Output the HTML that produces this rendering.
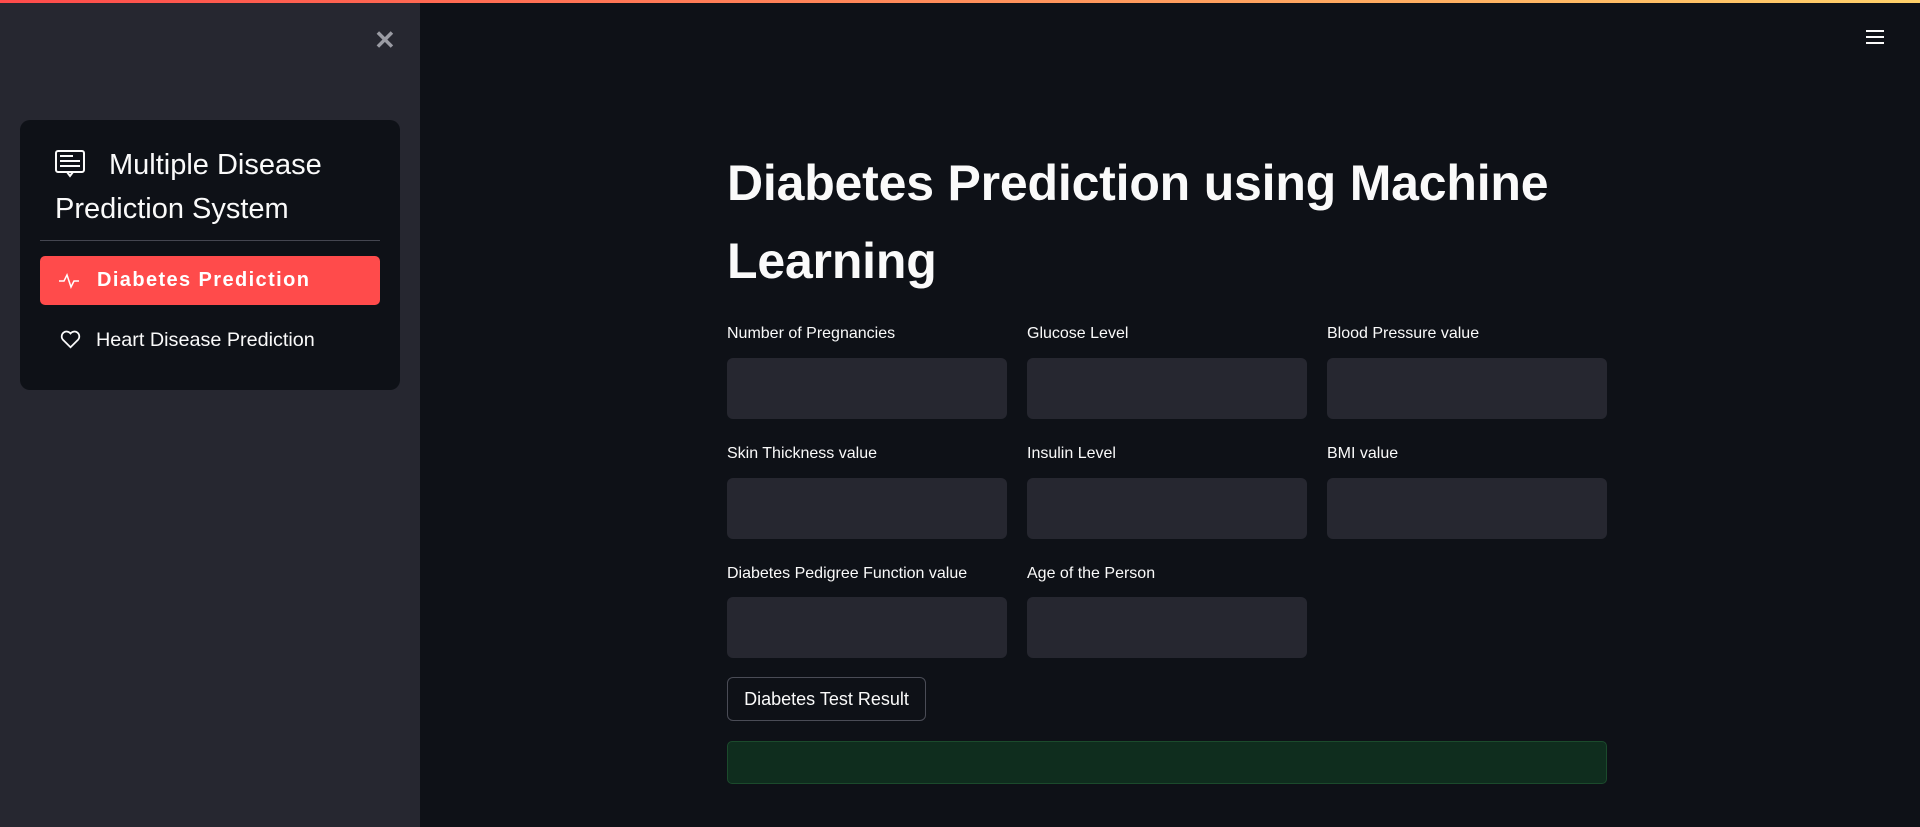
<!DOCTYPE html>
<html><head><meta charset="utf-8"><style>
*{margin:0;padding:0;box-sizing:border-box}
body{width:1920px;height:827px;background:#0e1117;font-family:"Liberation Sans",sans-serif;color:#fafafa;position:relative;overflow:hidden}
.top{position:absolute;left:0;top:0;width:1920px;height:3px;background:linear-gradient(90deg,#ff4b4b,#ffd16a)}
.side{position:absolute;left:0;top:3px;width:420px;height:824px;background:#262730}
.close{position:absolute;left:374px;top:22px;font-size:26px;color:#9a9ba3;font-weight:bold}
.card{position:absolute;left:20px;top:120px;width:380px;height:270px;background:#0e1117;border-radius:10px}
.ttl{position:absolute;left:35px;top:23px;font-size:29px;line-height:44px;color:#fafafa;width:340px}
.div{position:absolute;left:20px;top:120px;width:340px;height:1px;background:#444650}
.act{position:absolute;left:20px;top:136px;width:340px;height:49px;background:#ff4b4b;border-radius:5px}
.act span{position:absolute;left:57px;top:13px;font-size:20px;font-weight:bold;letter-spacing:1.4px;color:#fff}
.heart{position:absolute;left:76px;top:209px;font-size:19.8px;color:#fafafa}
.lbl{position:absolute;font-size:16px;color:#fafafa}
.inp{position:absolute;width:280px;height:61px;background:#262730;border-radius:6px}
h1{position:absolute;left:727px;top:144px;font-size:50px;line-height:78px;font-weight:bold;letter-spacing:-0.2px}
.btn{position:absolute;left:727px;top:677px;width:199px;height:44px;border:1px solid #4a4c56;border-radius:6px;font-size:18px;line-height:42px;text-align:center}
.res{position:absolute;left:727px;top:741px;width:880px;height:43px;background:#0f2d1e;border:1px solid #1b4a2c;border-radius:5px}
</style></head><body>
<div class="top"></div>
<div class="side">
<div class="close">✕</div>
</div>
<div class="card">
<svg style="position:absolute;left:35px;top:30px" width="30" height="28" viewBox="0 0 30 28" fill="none" stroke="#fafafa" stroke-width="2"><rect x="1" y="1" width="28" height="21" rx="2"/><line x1="5" y1="6" x2="18" y2="6"/><line x1="5" y1="11" x2="25" y2="11"/><line x1="5" y1="16" x2="25" y2="16"/><path d="M12 22 L15 26 L18 22"/></svg>
<div class="ttl"><span style="margin-left:54px">Multiple Disease</span><br>Prediction System</div>
<div class="div"></div>
<div class="act"><svg style="position:absolute;left:19px;top:17px" width="20" height="16" viewBox="0 0 20 16" fill="none" stroke="#fff" stroke-width="1.5"><path d="M0 8 H5 L8 2 L12 14 L15 8 H20"/></svg><span>Diabetes Prediction</span></div>
<svg style="position:absolute;left:40px;top:210px" width="21" height="19" viewBox="0 0 24 22" fill="none" stroke="#fafafa" stroke-width="2"><path d="M12 20 L3 11 A5 5 0 0 1 12 4 A5 5 0 0 1 21 11 Z"/></svg>
<div class="heart">Heart Disease Prediction</div>
</div>
<svg style="position:absolute;left:1866px;top:29px" width="18" height="16" viewBox="0 0 18 16" stroke="#fafafa" stroke-width="2"><line x1="0" y1="2" x2="18" y2="2"/><line x1="0" y1="8" x2="18" y2="8"/><line x1="0" y1="14" x2="18" y2="14"/></svg>
<h1>Diabetes Prediction using Machine<br>Learning</h1>
<div class="lbl" style="left:727px;top:325px">Number of Pregnancies</div>
<div class="lbl" style="left:1027px;top:325px">Glucose Level</div>
<div class="lbl" style="left:1327px;top:325px">Blood Pressure value</div>
<div class="inp" style="left:727px;top:358px"></div>
<div class="inp" style="left:1027px;top:358px"></div>
<div class="inp" style="left:1327px;top:358px"></div>
<div class="lbl" style="left:727px;top:445px">Skin Thickness value</div>
<div class="lbl" style="left:1027px;top:445px">Insulin Level</div>
<div class="lbl" style="left:1327px;top:445px">BMI value</div>
<div class="inp" style="left:727px;top:478px"></div>
<div class="inp" style="left:1027px;top:478px"></div>
<div class="inp" style="left:1327px;top:478px"></div>
<div class="lbl" style="left:727px;top:565px">Diabetes Pedigree Function value</div>
<div class="lbl" style="left:1027px;top:565px">Age of the Person</div>
<div class="inp" style="left:727px;top:597px"></div>
<div class="inp" style="left:1027px;top:597px"></div>
<div class="btn">Diabetes Test Result</div>
<div class="res"></div>
</body></html>
